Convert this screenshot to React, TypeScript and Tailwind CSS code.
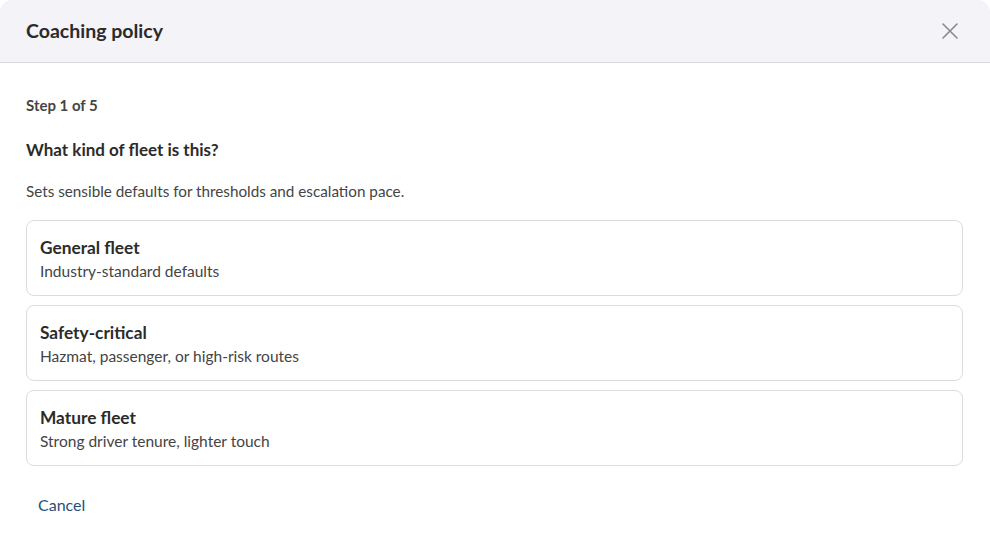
const FLEET_TYPES = [
  { id: 'general', title: 'General fleet', desc: 'Industry-standard defaults' },
  { id: 'safety', title: 'Safety-critical', desc: 'Hazmat, passenger, or high-risk routes' },
  { id: 'mature', title: 'Mature fleet', desc: 'Strong driver tenure, lighter touch' },
]

const CoachingPolicyModal = () => {
  return (
    <div className="w-[990px] h-[540px] bg-white rounded-t-xl overflow-hidden text-[#2b2b2b]"
      style={{ fontFamily: 'Lato, "Open Sans", sans-serif' }}>
      <div className="h-[63px] flex items-center justify-between pl-[26px] pr-[32px] bg-[#f3f3f8] border-b border-[#d9d9de]">
        <h2 className="text-[19.5px] font-bold">Coaching policy</h2>
        <button className="text-[#8a8a8a]">
          <svg className="w-[16px] h-[16px]" viewBox="0 0 16 16" fill="none" stroke="currentColor" strokeWidth={1.6} strokeLinecap="round">
            <path d="M1 1l14 14M15 1L1 15" />
          </svg>
        </button>
      </div>

      <div className="pl-[26px] pr-[27px] pt-[32px]">
        <p className="text-[15px] leading-5 font-bold text-[#444]">Step 1 of 5</p>
        <h3 className="mt-[23px] text-[17px] leading-6 font-bold">What kind of fleet is this?</h3>
        <p className="mt-[19px] text-[15.25px] leading-5 text-[#444]">Sets sensible defaults for thresholds and escalation pace.</p>

        <div className="mt-[19px] flex flex-col gap-[9px]">
          {FLEET_TYPES.map(f => (
            <button key={f.id}
              className="text-left h-[76px] px-[13px] py-4 rounded-lg border border-[#dcdcdc] bg-white">
              <div className="text-[17.3px] leading-[22px] font-bold">{f.title}</div>
              <div className="mt-0.5 text-[15.5px] leading-5 text-[#444]">{f.desc}</div>
            </button>
          ))}
        </div>

        <button className="mt-[29px] px-3 text-[16px] leading-5 text-[#1f4f7e]">Cancel</button>
      </div>
    </div>
  )
}

export default function App() {
  return <CoachingPolicyModal />
}
